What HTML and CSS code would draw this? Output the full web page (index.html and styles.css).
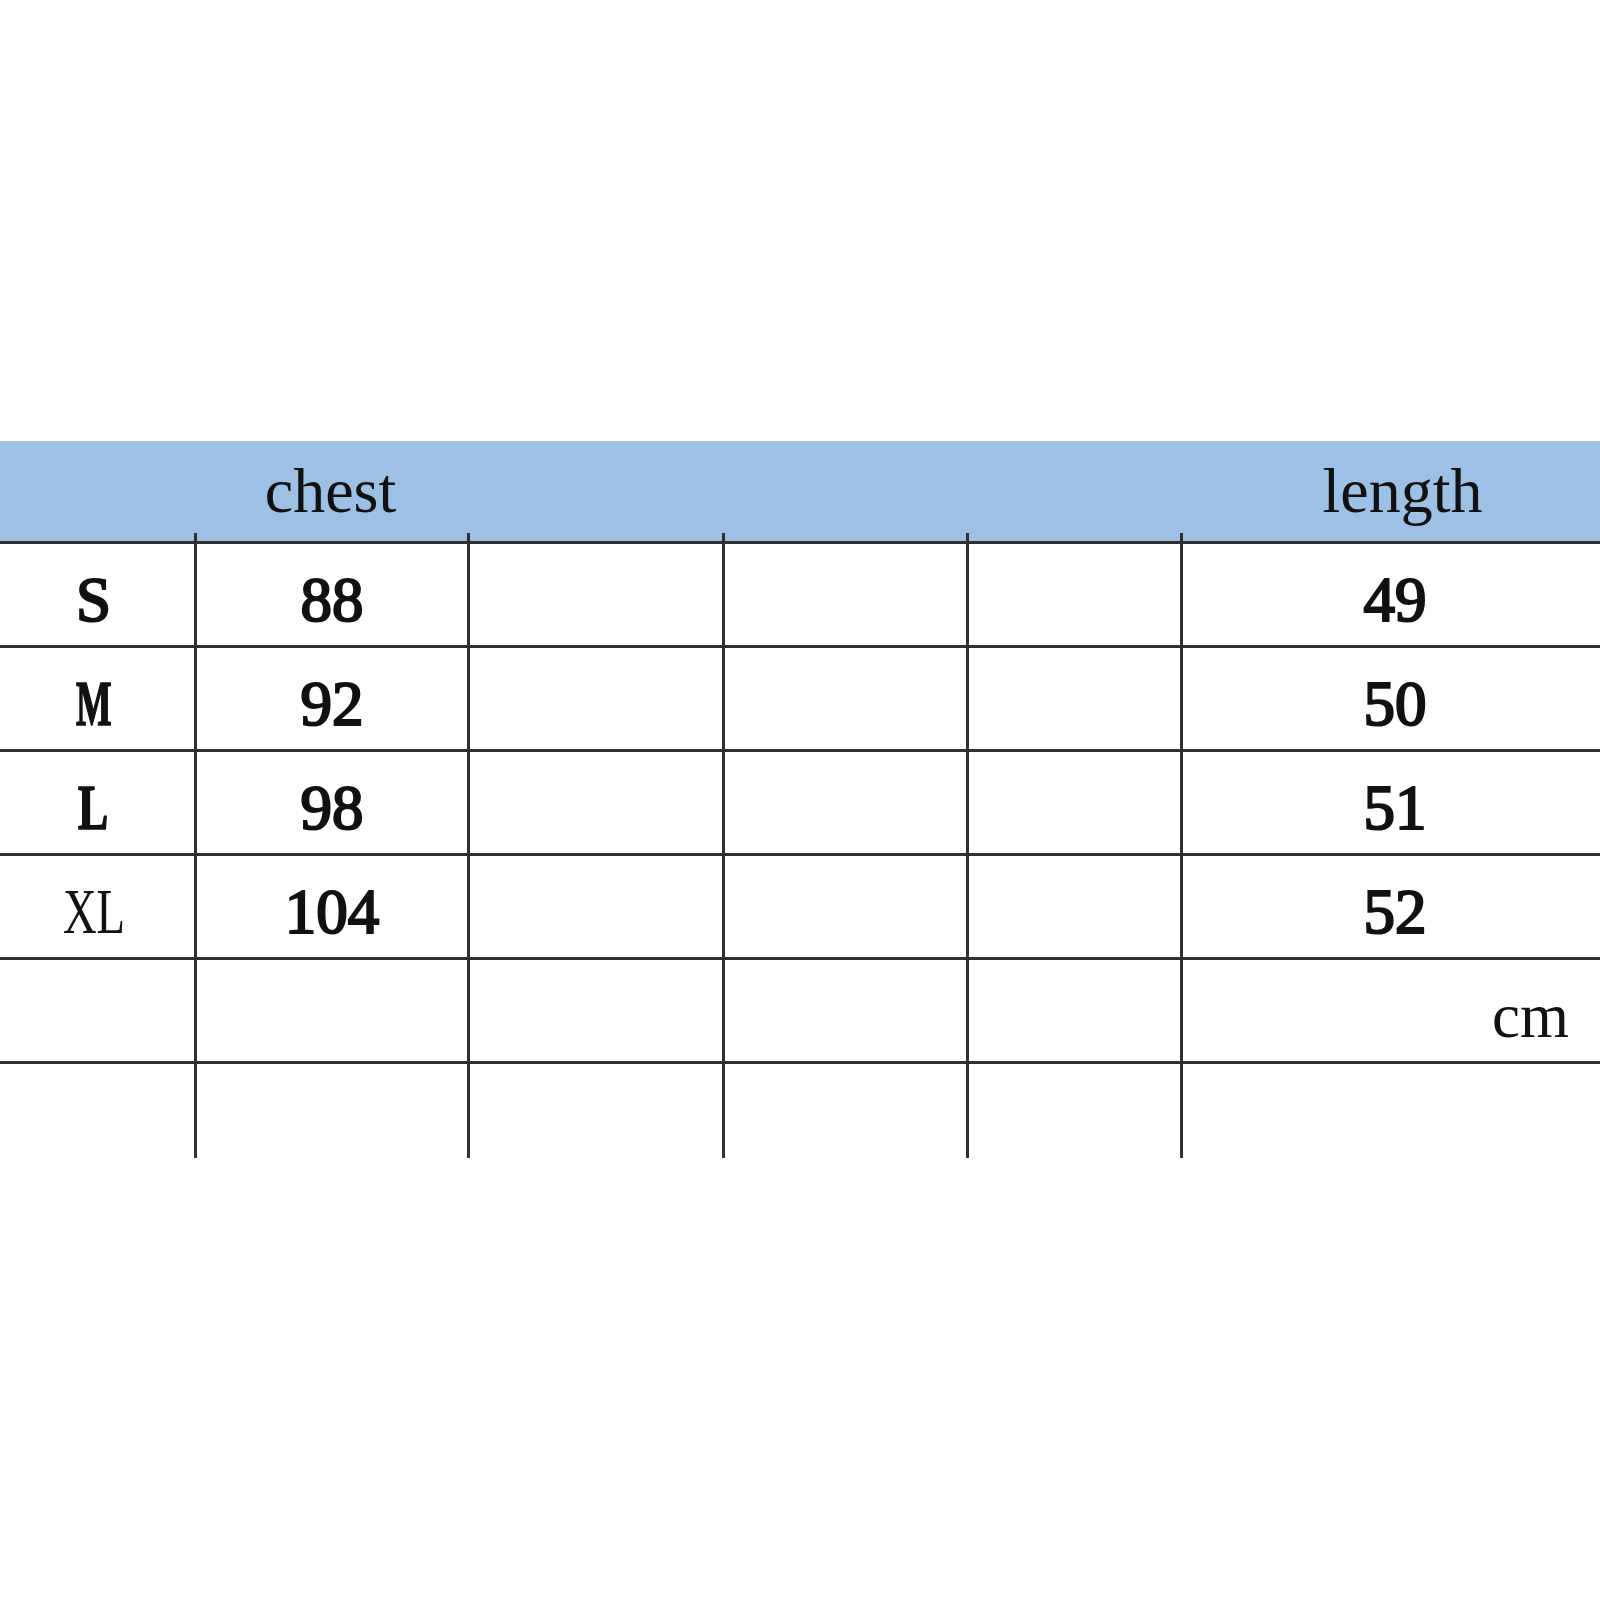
FILE: index.html
```html
<!DOCTYPE html>
<html lang="en">
<head>
<meta charset="utf-8">
<title>Size chart</title>
<link rel="stylesheet" href="styles.css">
</head>
<body>
<div class="page">
  <div class="chart">
    <div class="hd"></div>
    <div class="hd hd-text">chest</div>
    <div class="hd"></div>
    <div class="hd"></div>
    <div class="hd"></div>
    <div class="hd hd-text hd-len">length</div>

    <div class="stub"></div>
    <div class="stub vl"></div>
    <div class="stub vl"></div>
    <div class="stub vl"></div>
    <div class="stub vl"></div>
    <div class="stub vl"></div>

    <div class="c med">S</div>
    <div class="c vl med">88</div>
    <div class="c vl"></div>
    <div class="c vl"></div>
    <div class="c vl"></div>
    <div class="c vl med">49</div>

    <div class="c"><span class="narrow heavy narrow-m">M</span></div>
    <div class="c vl med">92</div>
    <div class="c vl"></div>
    <div class="c vl"></div>
    <div class="c vl"></div>
    <div class="c vl med">50</div>

    <div class="c"><span class="narrow heavy narrow-l">L</span></div>
    <div class="c vl med">98</div>
    <div class="c vl"></div>
    <div class="c vl"></div>
    <div class="c vl"></div>
    <div class="c vl med">51</div>

    <div class="c"><span class="narrow narrow-xl">XL</span></div>
    <div class="c vl med">104</div>
    <div class="c vl"></div>
    <div class="c vl"></div>
    <div class="c vl"></div>
    <div class="c vl med">52</div>

    <div class="c"></div>
    <div class="c vl"></div>
    <div class="c vl"></div>
    <div class="c vl"></div>
    <div class="c vl"></div>
    <div class="c vl unit">cm</div>

    <div class="c"></div>
    <div class="c vl"></div>
    <div class="c vl"></div>
    <div class="c vl"></div>
    <div class="c vl"></div>
    <div class="c vl"></div>
  </div>
</div>
</body>
</html>
```

FILE: styles.css
```css
html, body {
  margin: 0;
  padding: 0;
  background: #ffffff;
}

.page {
  width: 1600px;
  height: 1600px;
  overflow: hidden;
  padding-top: 441px;
  box-sizing: border-box;
}

.chart {
  margin-left: -7px;
  width: 1614px;
  display: grid;
  grid-template-columns: 201px 273px 255px 244px 214px 427px;
  grid-template-rows: 92px 8px repeat(5, 104px) 97px;
  font-family: "Liberation Serif", "Times New Roman", serif;
  color: #111;
}

.hd, .stub {
  background: #9cc1e5;
}

.hd-text {
  font-size: 64px;
  line-height: 64px;
  text-align: center;
  padding-top: 18px;
  box-sizing: border-box;
}

.hd-len {
  padding-left: 18px;
}

.vl {
  border-left: 3px solid #303030;
}

.c {
  border-top: 3px solid #303030;
  font-size: 63px;
  line-height: 64px;
  text-align: center;
  padding-top: 24px;
  box-sizing: border-box;
}

.med {
  -webkit-text-stroke: 2.2px #111;
}

.narrow {
  display: inline-block;
  font-size: 63px;
}

.heavy {
  font-weight: bold;
  -webkit-text-stroke: 1.6px #111;
}

.narrow-m {
  transform: scaleX(0.6);
}

.narrow-l {
  transform: scaleX(0.72);
}

.narrow-xl {
  transform: scaleX(0.74);
}

.unit {
  text-align: right;
  padding-right: 38px;
}
```
